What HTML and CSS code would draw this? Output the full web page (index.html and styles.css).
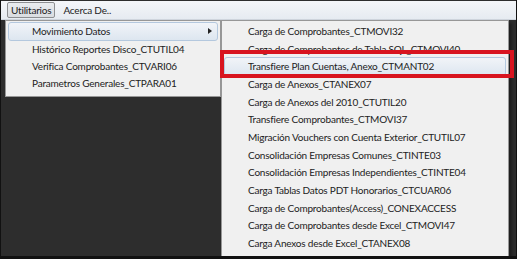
FILE: index.html
```html
<!DOCTYPE html>
<html lang="es">
<head>
    <meta charset="UTF-8">
    <title>Utilitarios</title>
    <link rel="stylesheet" href="styles.css">
</head>
<body>
    <div class="screen">
        <div class="menubar">
            <div class="menubar-item open">Utilitarios</div>
            <div class="menubar-item">Acerca De..</div>
        </div>

        <div class="desk">
            <div class="menu main-menu">
                <div class="menu-item hot">Movimiento Datos<span class="arrow"></span></div>
                <div class="menu-item">Histórico Reportes Disco_CTUTIL04</div>
                <div class="menu-item">Verifica Comprobantes_CTVARI06</div>
                <div class="menu-item">Parametros Generales_CTPARA01</div>
            </div>

            <div class="menu sub-menu">
                <div class="menu-item">Carga de Comprobantes_CTMOVI32</div>
                <div class="menu-item">Carga de Comprobantes de Tabla SQL_CTMOVI40</div>
                <div class="menu-item hot">Transfiere Plan Cuentas, Anexo_CTMANT02</div>
                <div class="menu-item">Carga de Anexos_CTANEX07</div>
                <div class="menu-item">Carga de Anexos del 2010_CTUTIL20</div>
                <div class="menu-item">Transfiere Comprobantes_CTMOVI37</div>
                <div class="menu-item">Migración Vouchers con Cuenta Exterior_CTUTIL07</div>
                <div class="menu-item">Consolidación Empresas Comunes_CTINTE03</div>
                <div class="menu-item">Consolidación Empresas Independientes_CTINTE04</div>
                <div class="menu-item">Carga Tablas Datos PDT Honorarios_CTCUAR06</div>
                <div class="menu-item">Carga de Comprobantes(Access)_CONEXACCESS</div>
                <div class="menu-item">Carga de Comprobantes desde Excel_CTMOVI47</div>
                <div class="menu-item">Carga Anexos desde Excel_CTANEX08</div>
                <div class="mark"></div>
            </div>
        </div>
    </div>
</body>
</html>
```

FILE: styles.css
```css
body {
    margin: 0;
    background-color: #111;
    font-family: 'Lato', 'Open Sans', sans-serif;
    font-size: 10px;
    letter-spacing: -0.2px;
    color: #222;
}

.screen {
    width: 515px;
    height: 255px;
    margin-left: 1px;
    padding-top: 1px;
    background-color: #2d2d2d;
    position: relative;
}

.menubar {
    display: flex;
    align-items: center;
    height: 18px;
    padding-left: 6px;
    background: linear-gradient(#f4f6f9, #e6ebf1);
    border-bottom: 1px solid #cfd5dd;
}

.menubar-item {
    padding: 0 3px;
    height: 14px;
    line-height: 14px;
    margin-right: 4px;
    border: 1px solid transparent;
}

.menubar-item.open {
    border-color: #8d8f92;
    border-radius: 2px;
    background: linear-gradient(#e9ecef, #dadde1);
}

.desk {
    display: flex;
    align-items: flex-start;
    padding-left: 4px;
}

.menu {
    background-color: #f0f0f0;
    border: 1px solid #979797;
    padding: 1px 2px;
}

.main-menu {
    width: 210px;
    padding-bottom: 4px;
}

.sub-menu {
    position: relative;
    width: 282px;
    padding-bottom: 5px;
    box-shadow: 3px 3px 3px rgba(0,0,0,0.35);
}

.menu-item {
    position: relative;
    box-sizing: border-box;
    height: 18.67px;
    line-height: 16.67px;
    margin-bottom: -1px;
    padding-left: 23px;
    white-space: nowrap;
    border: 1px solid transparent;
}

.main-menu .menu-item {
    height: 17px;
    line-height: 15px;
    margin: 0;
}

.main-menu .menu-item.hot {
    height: 19px;
    line-height: 17px;
}

.menu-item.hot {
    background: linear-gradient(#f1f4f8, #dde6f0);
    border-color: #b4c8de;
    border-radius: 3px;
}

.arrow {
    position: absolute;
    right: 5px;
    top: 5px;
    border-left: 4px solid #222;
    border-top: 3.5px solid transparent;
    border-bottom: 3.5px solid transparent;
}

.mark {
    position: absolute;
    left: -2px;
    top: 29px;
    width: 286px;
    height: 20px;
    border: 4px solid #d8141f;
}
```
